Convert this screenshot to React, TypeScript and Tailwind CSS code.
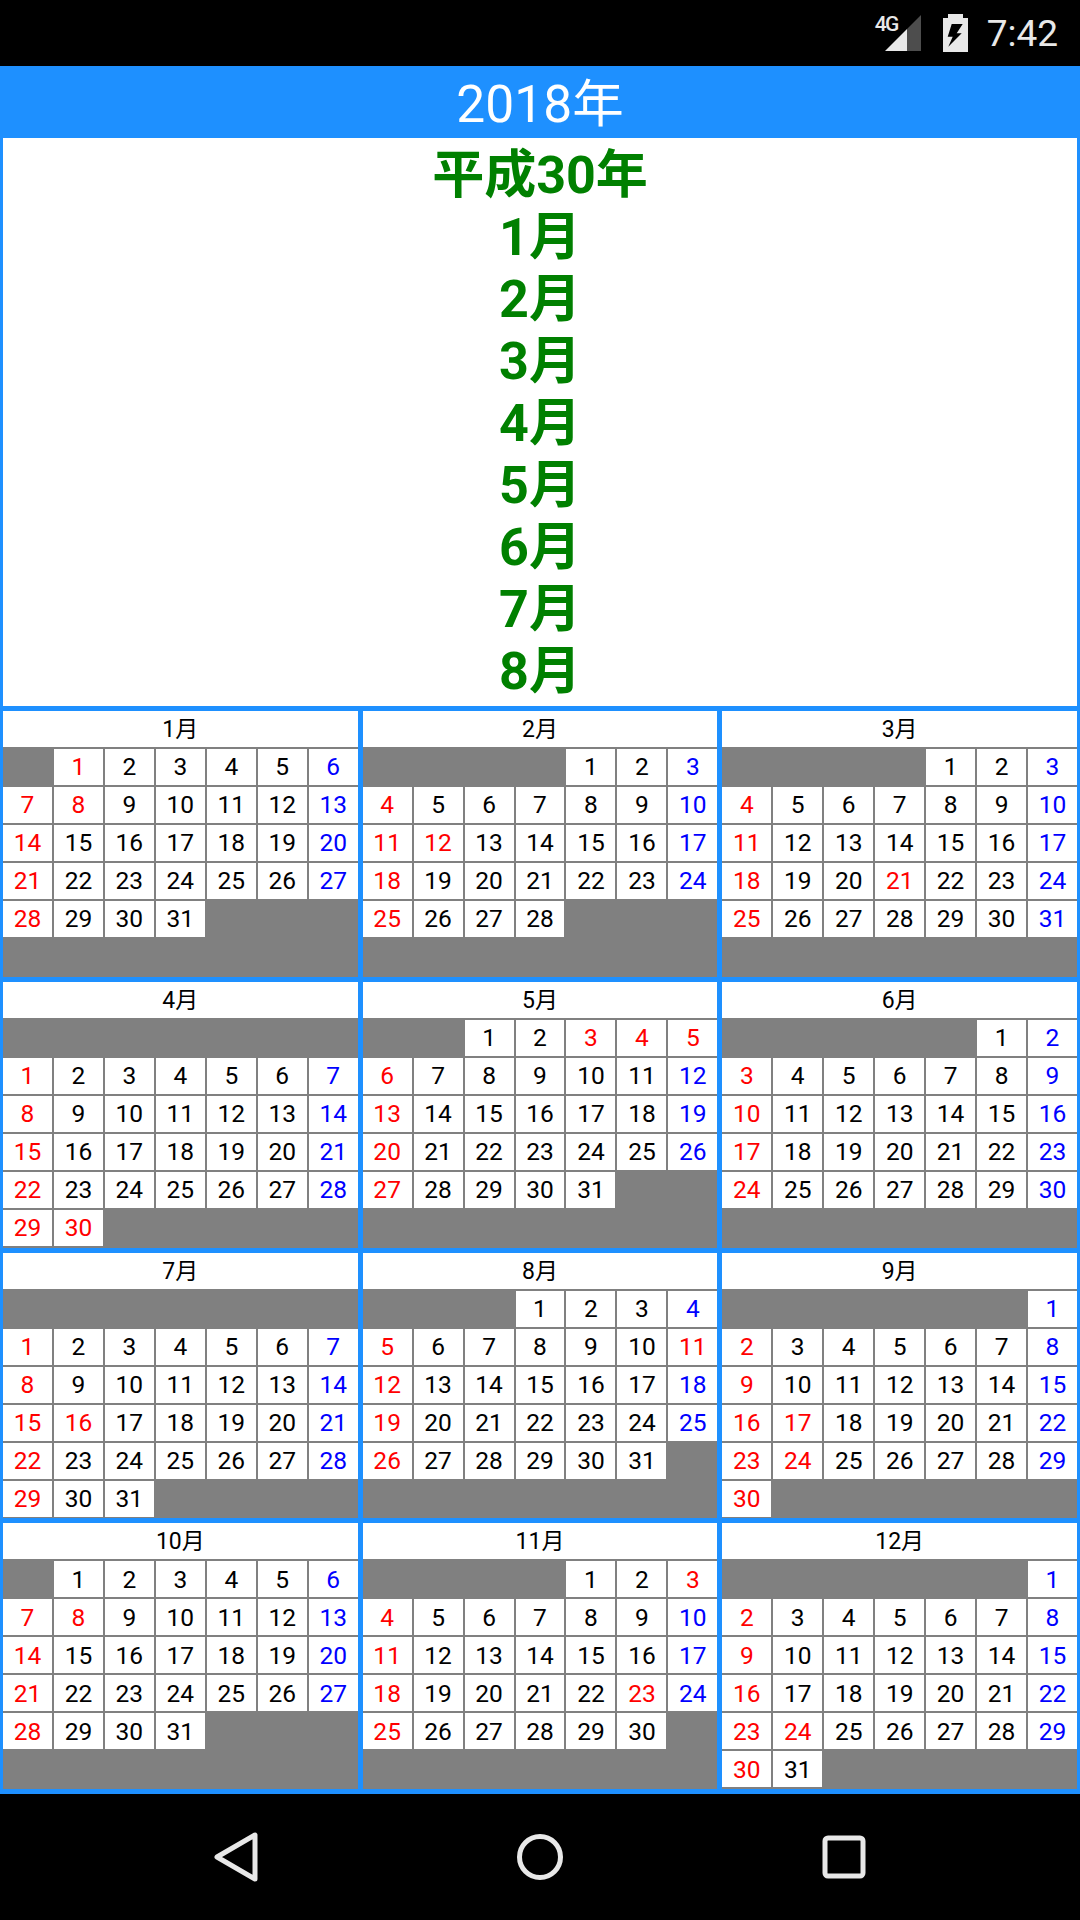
const FONT = "font-['Roboto','Noto_Sans_CJK_JP',sans-serif]";

type Month = { name: string; offset: number; days: number; holidays: number[] };

// a month starting on Sunday leaves its whole first row empty (offset 7)
const months: Month[] = [
  { name: "1月", offset: 1, days: 31, holidays: [1, 8] },
  { name: "2月", offset: 4, days: 28, holidays: [11, 12] },
  { name: "3月", offset: 4, days: 31, holidays: [21] },
  { name: "4月", offset: 7, days: 30, holidays: [29, 30] },
  { name: "5月", offset: 2, days: 31, holidays: [3, 4, 5] },
  { name: "6月", offset: 5, days: 30, holidays: [] },
  { name: "7月", offset: 7, days: 31, holidays: [16] },
  { name: "8月", offset: 3, days: 31, holidays: [11] },
  { name: "9月", offset: 6, days: 30, holidays: [17, 24] },
  { name: "10月", offset: 1, days: 31, holidays: [8] },
  { name: "11月", offset: 4, days: 30, holidays: [3, 23] },
  { name: "12月", offset: 6, days: 31, holidays: [24] },
];

const lines = ["平成30年", "1月", "2月", "3月", "4月", "5月", "6月", "7月", "8月"];

function dayColor(m: Month, day: number) {
  const col = (m.offset + day - 1) % 7;
  if (col === 0 || m.holidays.includes(day)) return "text-[#ff0000]";
  if (col === 6) return "text-[#0000ff]";
  return "text-black";
}

function MonthBox({ m }: { m: Month }) {
  const cells: (number | null)[] = [];
  for (let i = 0; i < 42; i++) {
    const d = i - m.offset + 1;
    cells.push(d >= 1 && d <= m.days ? d : null);
  }
  return (
    <div className="flex flex-col min-w-0 min-h-0">
      <div className="h-[36px] shrink-0 bg-white text-black text-[23px] leading-[38px] text-center">{m.name}</div>
      <div className="flex-1 min-h-0 grid grid-cols-7 grid-rows-6 gap-[2px] pt-[2px] pb-[1.75px] bg-[#808080]">
        {cells.map((d, i) =>
          d ? (
            <div key={i} className={`bg-white flex items-center justify-center pt-[1px] text-[24.5px] leading-none font-[450] ${dayColor(m, d)}`}>
              {d}
            </div>
          ) : (
            <div key={i} />
          )
        )}
      </div>
    </div>
  );
}

export default function App() {
  return (
    <div className={`w-[1080px] h-[1920px] flex flex-col bg-black overflow-hidden ${FONT}`}>
      {/* status bar */}
      <div className="h-[66px] shrink-0 flex items-center justify-end pr-[22px] text-[#e8e8e8]">
        <div className="relative w-[46px] h-[38px] mr-[22px]">
          <span className="absolute left-0 top-[1px] text-[21px] leading-[18px] font-medium tracking-[-1.5px]">4G</span>
          <svg width="46" height="38" viewBox="0 0 46 38" className="block">
            <polygon points="10,37 32,15 32,37" fill="#e8e8e8" />
            <polygon points="32,15 46,1 46,37 32,37" fill="#4d4d4d" />
          </svg>
        </div>
        <svg width="25" height="38" viewBox="0 0 25 38" className="mr-[19px]">
          <path d="M5 0h15v4h5v34H0V4h5z" fill="#e8e8e8" />
          <polygon points="8.7,10 19.7,10 13.7,19.3 18.7,19.3 5.3,32.7 9.7,22.7 4.7,22.7" fill="#000" />
        </svg>
        <span className="text-[37px] leading-none font-[450]">7:42</span>
      </div>

      {/* title */}
      <div className="h-[72px] shrink-0 bg-[#1e90ff] text-white text-[51.5px] leading-[72px] pt-[3px] text-center">2018年</div>

      {/* era list */}
      <div className="h-[568px] shrink-0 bg-white border-x-[3px] border-[#1e90ff] pt-[7px] text-[#008000] font-bold text-[52px] leading-[62px] text-center">
        {lines.map((l) => (
          <div key={l}>{l}</div>
        ))}
      </div>

      {/* months */}
      <div className="h-[1088px] shrink-0 bg-[#1e90ff] grid grid-cols-3 grid-rows-4 gap-[5px] px-[3px] py-[5px]">
        {months.map((m) => (
          <MonthBox key={m.name} m={m} />
        ))}
      </div>

      {/* nav bar */}
      <div className="flex-1 flex items-center justify-center">
        <div className="w-[304px] flex justify-center">
          <svg width="46" height="52" viewBox="0 0 46 52">
            <path d="M42 4v44L4 26z" fill="none" stroke="#e8e8e8" strokeWidth="5" strokeLinejoin="round" />
          </svg>
        </div>
        <div className="w-[304px] flex justify-center">
          <svg width="46" height="46" viewBox="0 0 46 46">
            <circle cx="23" cy="23" r="20.5" fill="none" stroke="#e8e8e8" strokeWidth="5" />
          </svg>
        </div>
        <div className="w-[304px] flex justify-center">
          <svg width="44" height="44" viewBox="0 0 44 44">
            <rect x="3" y="3" width="38" height="38" rx="3" fill="none" stroke="#e8e8e8" strokeWidth="5" />
          </svg>
        </div>
      </div>
    </div>
  );
}
